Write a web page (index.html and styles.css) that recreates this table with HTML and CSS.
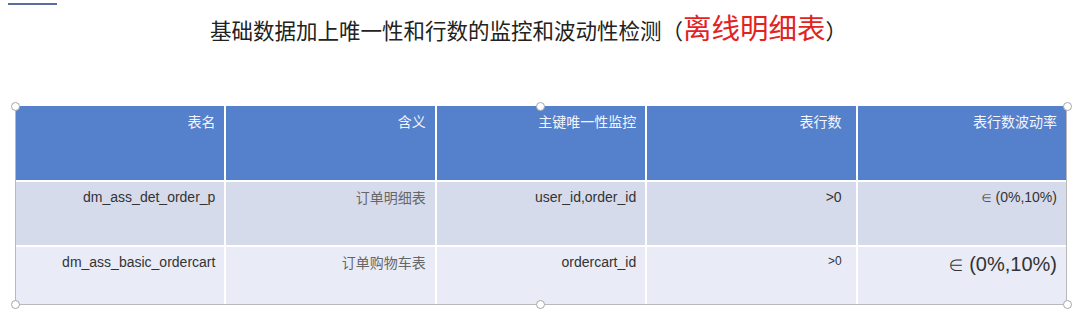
FILE: index.html
```html
<!DOCTYPE html>
<html lang="zh">
<head>
<meta charset="utf-8">
<link rel="stylesheet" href="styles.css">
</head>
<body>
<div class="topline"></div>
<h1 class="title">基础数据加上唯一性和行数的监控和波动性检测（<span class="red">离线明细表</span>）</h1>
<div class="wrap">
  <div class="grid">
    <div class="cell head">表名</div>
    <div class="cell head">含义</div>
    <div class="cell head">主键唯一性监控</div>
    <div class="cell head c4">表行数</div>
    <div class="cell head">表行数波动率</div>

    <div class="cell r1 latin">dm_ass_det_order_p</div>
    <div class="cell r1 cn">订单明细表</div>
    <div class="cell r1 latin">user_id,order_id</div>
    <div class="cell r1 latin c4">&gt;0</div>
    <div class="cell r1 latin">∈ (0%,10%)</div>

    <div class="cell r2 latin">dm_ass_basic_ordercart</div>
    <div class="cell r2 cn">订单购物车表</div>
    <div class="cell r2 latin">ordercart_id</div>
    <div class="cell r2 latin c4 small">&gt;0</div>
    <div class="cell r2 latin big">∈ (0%,10%)</div>
  </div>
  <span class="handle h-tl"></span>
  <span class="handle h-tm"></span>
  <span class="handle h-tr"></span>
  <span class="handle h-bl"></span>
  <span class="handle h-bm"></span>
  <span class="handle h-br"></span>
</div>
</body>
</html>
```

FILE: styles.css
```css
html, body {
  margin: 0;
  padding: 0;
  background: #ffffff;
  width: 1080px;
  height: 318px;
  overflow: hidden;
}

.topline {
  margin: 3px 0 0 8px;
  width: 49px;
  height: 2px;
  background: #5a6d9e;
}

.title {
  margin: 5px 0 0 210px;
  font-family: "Noto Sans CJK SC", "Noto Sans", sans-serif;
  font-weight: 400;
  font-size: 21.5px;
  line-height: 34px;
  color: #222222;
  white-space: nowrap;
}

.red {
  color: #e2231f;
  font-size: 28.5px;
}

.wrap {
  position: relative;
  margin: 59px 0 0 15px;
  width: 1052px;
}

.grid {
  display: grid;
  grid-template-columns: repeat(5, 1fr);
  grid-template-rows: 74px 63px 57px;
  column-gap: 2px;
  row-gap: 2px;
  background: #ffffff;
  border-left: 1px solid #b9b9b9;
  border-right: 1px solid #b9b9b9;
  border-bottom: 1px solid #b9b9b9;
}

.cell {
  padding: 7px 9px 0 9px;
  text-align: right;
  font-size: 14px;
  line-height: 16px;
  white-space: nowrap;
}

.c4 {
  padding-right: 14px;
}

.head {
  background: #5580cc;
  color: #f3f5fb;
  font-family: "Noto Sans CJK SC", sans-serif;
}

.r1 {
  background: #d6dbeb;
}

.r2 {
  background: #e9ecf6;
}

.latin {
  font-family: "Liberation Sans", Arial, sans-serif;
  color: #333333;
}

.cn {
  font-family: "Noto Sans CJK SC", sans-serif;
  color: #666666;
}

.small {
  font-size: 12px;
  padding-top: 6px;
}

.big {
  font-size: 20px;
  line-height: 24px;
  padding-top: 5px;
}

.handle {
  position: absolute;
  width: 7px;
  height: 7px;
  border: 1px solid #a8a8a8;
  border-radius: 50%;
  background: #ffffff;
}

.h-tl { left: -4px; top: -4px; }
.h-tm { left: 521px; top: -4px; }
.h-tr { right: -5px; top: -4px; }
.h-bl { left: -4px; bottom: -4px; }
.h-bm { left: 521px; bottom: -4px; }
.h-br { right: -5px; bottom: -4px; }
```
